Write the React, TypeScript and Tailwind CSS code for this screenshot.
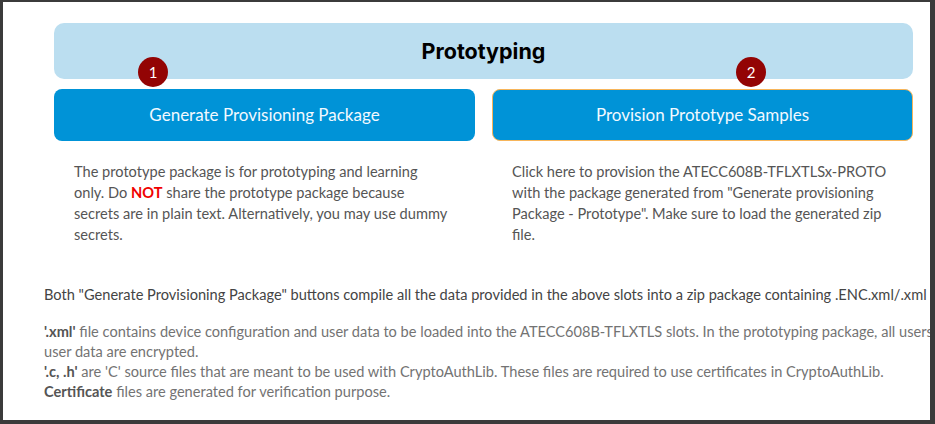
import React from "react";

const body = { fontFamily: "Lato, 'Open Sans', sans-serif" };
const title = { fontFamily: "Inter, 'Open Sans', sans-serif" };

const Badge: React.FC<{ n: string; className: string }> = ({ n, className }) => (
  <div
    className={
      "absolute top-[-32px] w-[30px] h-[30px] rounded-full bg-[#930404] text-white text-[15px] flex items-center justify-center " +
      className
    }
    style={body}
  >
    {n}
  </div>
);

export default function App() {
  return (
    <div className="w-[935px] h-[424px] bg-[#3b3b3b] pt-[2px] pl-[3px] pr-[5px] pb-[4px]">
      <div className="bg-white h-full overflow-hidden">
        <div className="pl-[51px] pr-[17px] pt-[21px]">
          <div
            className="h-[56px] rounded-[10px] bg-[#bbdef0] flex items-center justify-center text-[21.5px] font-bold text-black"
            style={title}
          >
            Prototyping
          </div>
          <div className="grid grid-cols-2 gap-[17px] mt-[10px]">
            <div className="relative">
              <Badge n="1" className="left-[84px]" />
              <button
                className="w-full h-[52px] rounded-[8px] bg-[#0093d7] text-[#f2f9ff] text-[17px]"
                style={body}
              >
                Generate Provisioning Package
              </button>
              <p className="mt-[20px] px-[20px] text-[14.6px] leading-[21px] text-[#555] whitespace-nowrap" style={body}>
                The prototype package is for prototyping and learning
                <br />
                only. Do <b className="text-[#f00000]">NOT</b> share the prototype package because
                <br />
                secrets are in plain text. Alternatively, you may use dummy
                <br />
                secrets.
              </p>
            </div>
            <div className="relative">
              <Badge n="2" className="left-[244px]" />
              <button
                className="w-full h-[52px] rounded-[8px] bg-[#0093d7] border border-[#f7b55a] text-[#f2f9ff] text-[17px]"
                style={body}
              >
                Provision Prototype Samples
              </button>
              <p className="mt-[20px] px-[20px] text-[14.6px] leading-[21px] text-[#555] whitespace-nowrap" style={body}>
                Click here to provision the ATECC608B-TFLXTLSx-PROTO
                <br />
                with the package generated from "Generate provisioning
                <br />
                Package - Prototype". Make sure to load the generated zip
                <br />
                file.
              </p>
            </div>
          </div>
        </div>
        <div className="pl-[41px] w-[1000px] text-[14.6px] leading-[20px] whitespace-nowrap" style={body}>
          <p className="mt-[40px] text-[#444]">
            Both "Generate Provisioning Package" buttons compile all the data provided in the above
            slots into a zip package containing .ENC.xml/.xml files
          </p>
          <p className="mt-[17px] text-[#737373]">
            <b className="text-[#555]">'.xml'</b> file contains device configuration and user data to
            be loaded into the ATECC608B-TFLXTLS slots. In the prototyping package, all users'
            <br />
            user data are encrypted.
            <br />
            <b className="text-[#555]">'.c, .h'</b> are 'C' source files that are meant to be used
            with CryptoAuthLib. These files are required to use certificates in CryptoAuthLib.
            <br />
            <b className="text-[#555]">Certificate</b> files are generated for verification purpose.
          </p>
        </div>
      </div>
    </div>
  );
}
